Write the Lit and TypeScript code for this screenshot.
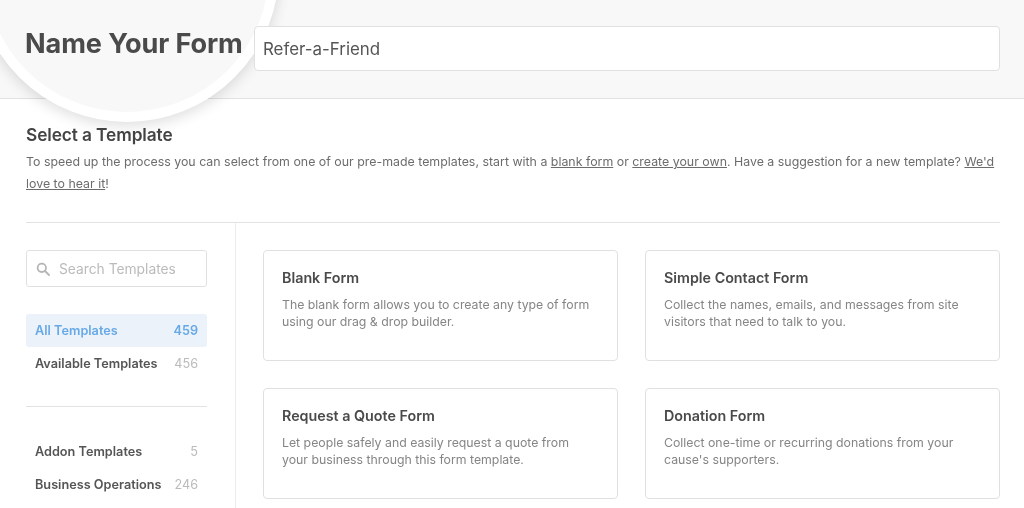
import { LitElement, html, css, svg } from "lit";
import { customElement } from "lit/decorators.js";

const cards = [
  ["Blank Form", "The blank form allows you to create any type of form", "using our drag & drop builder."],
  ["Simple Contact Form", "Collect the names, emails, and messages from site", "visitors that need to talk to you."],
  ["Request a Quote Form", "Let people safely and easily request a quote from", "your business through this form template."],
  ["Donation Form", "Collect one-time or recurring donations from your", "cause's supporters."],
];

@customElement("app-root")
export class AppRoot extends LitElement {
  static styles = css`
    :host { display: block; width: 1024px; height: 508px; overflow: hidden; position: relative; background: #fff;
      font-family: Inter, "Liberation Sans", sans-serif; color: #444; }
    * { box-sizing: border-box; }
    .page { filter: blur(0.35px); height: 508px; }
    .head { height: 99px; background: #f8f8f8; border-bottom: 1px solid #e2e2e2; display: flex; align-items: flex-start;
      padding: 26px 24px 0 25px; gap: 11px; }
    .lens { position: absolute; left: -25px; top: -182px; width: 304px; height: 304px; border-radius: 50%;
      background: #f8f8f8; border: 10px solid #fff; box-shadow: 0 4px 14px rgba(0,0,0,.13); }
    .title { position: relative; margin: 0; width: 218px; font-size: 27.1px; line-height: 35px; font-weight: 700; color: #4a4a4a;
      letter-spacing: -0.1px; white-space: nowrap; }
    .name { position: relative; flex: 1; height: 45px; background: #fff; border: 1px solid #e0e0e0; border-radius: 4px;
      padding: 0 8px; font-size: 16.9px; line-height: 44px; color: #555; }
    .intro { padding: 26px 26px 0; }
    h2 { margin: 0; font-size: 17.3px; line-height: 20px; font-weight: 600; color: #444; letter-spacing: -0.1px; }
    .intro p { margin: 6px 0 0; font-size: 12.38px; line-height: 22px; color: #6c6c6c; height: 60px; }
    .intro a { color: #6c6c6c; text-decoration: underline; }
    .body { margin: 11px 24px 0 26px; border-top: 1px solid #e2e2e2; display: flex; }
    .side { width: 210px; flex: none; padding: 27px 28px 0 0; border-right: 1px solid #ececec; height: 300px; }
    .search { height: 37px; border: 1px solid #e0e0e0; border-radius: 3px; display: flex; align-items: center; padding-left: 9px; gap: 9px;
      font-size: 13.8px; color: #bbb; }
    .search svg { flex: none; }
    .cats { margin-top: 27px; }
    .cat { height: 33px; display: flex; justify-content: space-between; align-items: center; padding: 0 9px; border-radius: 3px;
      font-size: 12.7px; font-weight: 600; color: #555; }
    .cat span:last-child { color: #bbb; font-weight: 400; }
    .cat.on { background: #ebf2fa; color: #67a9e6; }
    .cat.on span:last-child { color: #67a9e6; font-weight: 600; }
    hr { margin: 26px 0 28px; border: 0; border-top: 1px solid #e2e2e2; }
    .grid { flex: 1; padding: 27px 0 0 27px; display: grid; grid-template-columns: 355px 355px; column-gap: 27px; row-gap: 27px; align-content: start; }
    .card { height: 111px; border: 1px solid #e0e0e0; border-radius: 4px; padding: 18px 18px 0; }
    .card h3 { margin: 0; font-size: 14.3px; line-height: 18px; font-weight: 600; color: #4a4a4a; }
    .card p { margin: 9px 0 0; font-size: 12.3px; line-height: 17px; color: #858585; white-space: nowrap; }
  `;

  render() {
    return html`
      <div class="page">
      <div class="head">
        <div class="lens"></div>
        <h1 class="title">Name Your Form</h1>
        <div class="name">Refer-a-Friend</div>
      </div>
      <div class="intro">
        <h2>Select a Template</h2>
        <p>To speed up the process you can select from one of our pre-made templates, start with a <a>blank form</a> or <a>create your own</a>. Have a suggestion for a new template? <a>We'd love to hear it</a>!</p>
      </div>
      <div class="body">
        <div class="side">
          <div class="search">
            <svg width="14" height="14" viewBox="0 0 14 14" fill="none" stroke="#b5b5b5" stroke-width="1.8">
              ${svg`<circle cx="5.8" cy="5.8" r="4.2"></circle><path d="M9 9l4 4" stroke-linecap="round"></path>`}
            </svg>
            Search Templates
          </div>
          <div class="cats">
            <div class="cat on"><span>All Templates</span><span>459</span></div>
            <div class="cat"><span>Available Templates</span><span>456</span></div>
          </div>
          <hr />
          <div class="cat"><span>Addon Templates</span><span>5</span></div>
          <div class="cat"><span>Business Operations</span><span>246</span></div>
        </div>
        <div class="grid">
          ${cards.map(c => html`<div class="card"><h3>${c[0]}</h3><p>${c[1]}<br />${c[2]}</p></div>`)}
        </div>
      </div>
      </div>
    `;
  }
}
